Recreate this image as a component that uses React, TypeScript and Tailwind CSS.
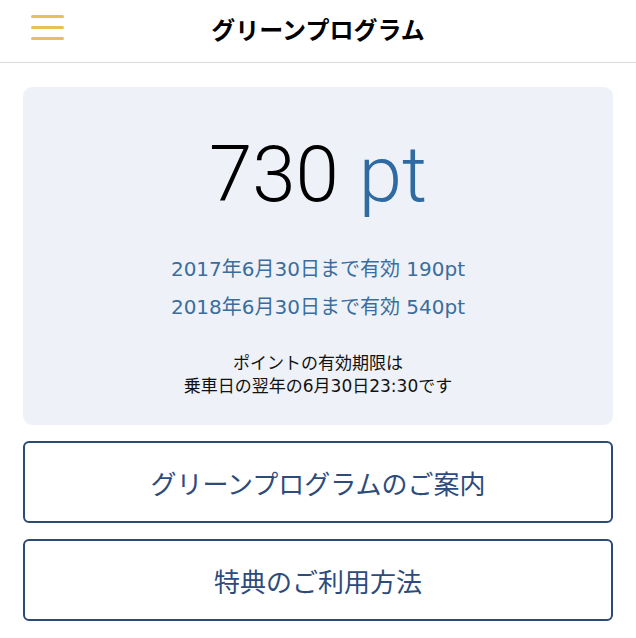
const jp = "font-['Noto_Sans_CJK_JP','Noto_Sans',sans-serif]";
const mixed = "font-['DejaVu_Sans','Noto_Sans_CJK_JP',sans-serif]";

export default function App() {
    return (
        <div className={`w-[636px] min-h-[638px] bg-white ${jp}`}>
            {/* Header */}
            <header className="relative flex items-center justify-center h-[63px] border-b border-[#dadada]">
                <button className="absolute left-[31px] top-[15px] flex flex-col gap-[8px]">
                    <span className="block w-[33px] h-[3px] rounded-full bg-[#e4c25a]" />
                    <span className="block w-[33px] h-[3px] rounded-full bg-[#e4c25a]" />
                    <span className="block w-[33px] h-[3px] rounded-full bg-[#e4c25a]" />
                </button>
                <h1 className="-mt-[4px] text-[24px] font-bold text-black">グリーンプログラム</h1>
            </header>

            <main className="px-[23px] pt-[24px] flex flex-col gap-[16px]">
                {/* Points card */}
                <div className="h-[338px] rounded-[9px] bg-[#eef2f8] flex flex-col items-center">
                    <div className="mt-[49px] flex items-baseline font-['Roboto','Liberation_Sans',sans-serif] font-light text-[78px] leading-none">
                        <span className="text-black">730</span>
                        <span className="ml-[20px] text-[#2f6aa3]">pt</span>
                    </div>
                    <div className={`mt-[44px] flex flex-col items-center gap-[16px] text-[20px] text-[#3a6d9e] leading-[22px] ${mixed}`}>
                        <p>2017年6月30日まで有効 190pt</p>
                        <p>2018年6月30日まで有効 540pt</p>
                    </div>
                    <div className={`mt-[34px] text-center text-[17px] leading-[23px] text-[#111] ${mixed}`}>
                        <p>ポイントの有効期限は</p>
                        <p>乗車日の翌年の6月30日23:30です</p>
                    </div>
                </div>

                {/* Links */}
                <button className="h-[82px] rounded-[6px] border-2 border-[#2c4a74] text-[26px] text-[#2d4b7b] flex items-center justify-center">
                    グリーンプログラムのご案内
                </button>
                <button className="h-[82px] rounded-[6px] border-2 border-[#2c4a74] text-[26px] text-[#2d4b7b] flex items-center justify-center">
                    特典のご利用方法
                </button>
            </main>
        </div>
    );
}
